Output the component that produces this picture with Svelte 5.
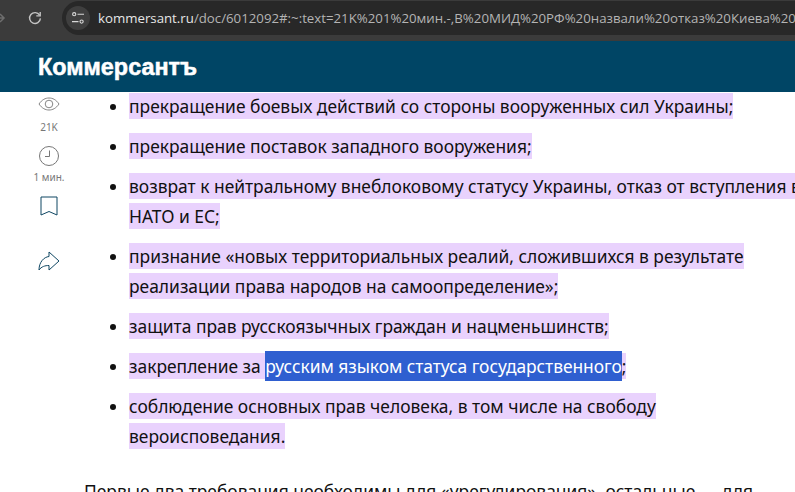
<script>
  const items = [
    [["прекращение боевых действий со стороны вооруженных сил Украины;"]],
    [["прекращение поставок западного вооружения;"]],
    [["возврат к нейтральному внеблоковому статусу Украины, отказ от вступления в"], ["НАТО и ЕС;"]],
    [["признание «новых территориальных реалий, сложившихся в результате"], ["реализации права народов на самоопределение»;"]],
    [["защита прав русскоязычных граждан и нацменьшинств;"]],
    [["закрепление за ", "русским языком статуса государственного", ";"]],
    [["соблюдение основных прав человека, в том числе на свободу"], ["вероисповедания."]],
  ];
</script>

<div class="page">
  <div class="toolbar">
    <svg class="fwd" width="14" height="14" viewBox="0 0 14 14"><path d="M-6 7H4M0 3l4 4-4 4" fill="none" stroke="#6e6e6e" stroke-width="1.5"/></svg>
    <svg class="reload" width="14" height="14" viewBox="0 0 14 14"><path d="M11.6 4.2A5.4 5.4 0 1 0 12.4 7.4" fill="none" stroke="#c4c4c4" stroke-width="1.4"/><path d="M12.2 1v3.9H8.3" fill="none" stroke="#c4c4c4" stroke-width="1.4"/></svg>
    <div class="omnibox">
      <div class="tune">
        <svg width="14" height="14" viewBox="0 0 14 14" fill="none" stroke="#d8d8d8" stroke-width="1.1"><circle cx="3.2" cy="3.2" r="1.6"/><path d="M6.5 3.2H13M1 10.6h6.5"/><circle cx="10.6" cy="10.6" r="1.6"/></svg>
      </div>
      <span class="url">kommersant.ru<span class="dim">/doc/6012092#:~:text=21K%201%20мин.-,В%20МИД%20РФ%20назвали%20отказ%20Киева%20</span></span>
    </div>
  </div>

  <header class="brand">
    <span class="logo">Коммерсантъ</span>
  </header>

  <div class="body">
    <aside class="side">
      <svg class="eye" width="22" height="14" viewBox="0 0 22 14" fill="none" stroke="#777" stroke-width="0.9"><path d="M1 7C4 2.600 7.400 1 11 1s7 1.600 10 6c-3 4.400-6.400 6-10 6S4 11.400 1 7z"/><circle cx="11" cy="7" r="3.800"/></svg>
      <span class="stat views">21K</span>
      <svg class="clock" width="20" height="20" viewBox="0 0 20 20" fill="none" stroke="#777" stroke-width="1"><circle cx="10" cy="10" r="9.500"/><path d="M10.500 4.500v6H6"/></svg>
      <span class="stat time">1 мин.</span>
      <svg class="mark" width="18" height="20" viewBox="0 0 18 20" fill="none" stroke="#0f4763" stroke-width="1"><path d="M1 1h16v18l-8-3.500-8 3.500z"/></svg>
      <svg class="share" width="22" height="20" viewBox="0 0 22 20" fill="none" stroke="#0f4763" stroke-width="1"><path d="M11 1l10 9-10 9v-4.500C7 14.500 3.500 15.500 1 19 1 11 6 6 11 5.500z"/></svg>
    </aside>

    <div class="article">
      <ul>
        {#each items as lines}
          <li>
            {#each lines as line}
              <div class="line">
                {#if line.length === 1}
                  <mark>{line[0]}</mark>
                {:else}
                  <mark>{line[0]}</mark><span class="sel">{line[1]}</span><mark>{line[2]}</mark>
                {/if}
              </div>
            {/each}
          </li>
        {/each}
      </ul>
      <p>Первые два требования необходимы для «урегулирования», остальные — для</p>
    </div>
  </div>
</div>

<style>
  :global(body) {
    margin: 0;
    background: #fff;
  }

  .page {
    width: 795px;
    height: 492px;
    overflow: hidden;
    font-family: "Noto Sans", sans-serif;
  }

  .toolbar {
    height: 41px;
    background: #3b3b3b;
    display: flex;
    align-items: center;
    position: relative;
    box-sizing: border-box;
    padding-left: 28px;
  }

  .fwd {
    position: absolute;
    left: 0;
    top: 11px;
  }

  .reload {
    flex-shrink: 0;
    margin-top: -6px;
  }

  .omnibox {
    margin-left: 20px;
    height: 34px;
    flex: 1;
    margin-top: -6px;
    margin-right: -40px;
    background: #282828;
    border-radius: 17px 0 0 17px;
    display: flex;
    align-items: center;
    padding-left: 4px;
    white-space: nowrap;
    overflow: hidden;
  }

  .tune {
    width: 24px;
    height: 24px;
    border-radius: 50%;
    background: #3f3f3f;
    display: flex;
    align-items: center;
    justify-content: center;
    flex-shrink: 0;
  }

  .url {
    margin-left: 8px;
    font-size: 13.25px;
    color: #e6e6e6;
    font-family: "Open Sans", "Noto Sans", sans-serif;
  }

  .dim {
    color: #b4b4b4;
  }

  .brand {
    height: 51px;
    box-sizing: border-box;
    padding-top: 2px;
    background: #004565;
    display: flex;
    align-items: center;
    padding-left: 38px;
  }

  .logo {
    font-family: "Liberation Sans", sans-serif;
    font-weight: 700;
    font-size: 23.4px;
    color: #fff;
    -webkit-text-stroke: 0.5px #fff;
  }

  .body {
    display: flex;
  }

  .side {
    width: 98px;
    flex-shrink: 0;
    display: flex;
    flex-direction: column;
    align-items: center;
  }

  .eye {
    margin-top: 5px;
  }

  .stat {
    font-size: 10px;
    line-height: 14px;
    color: #777;
  }

  .views {
    margin-top: 9px;
  }

  .clock {
    margin-top: 12px;
  }

  .time {
    margin-top: 4px;
  }

  .mark {
    margin-top: 12px;
  }

  .share {
    margin-top: 35px;
  }

  .article {
    flex: 1;
    min-width: 0;
    font-size: 17.42px;
    color: #111;
    white-space: nowrap;
  }

  ul {
    margin: -1px 0 0;
    padding: 0 0 0 31px;
    list-style: disc;
  }

  li {
    margin-bottom: 10px;
  }

  .line {
    height: 30px;
    display: flex;
    align-items: center;
    white-space: pre;
  }

  mark {
    background: #e9d2fd;
    color: inherit;
    line-height: 26px;
  }

  .sel {
    background: #2f5fd0;
    color: #fff;
    line-height: 30px;
    letter-spacing: -0.05px;
  }

  p {
    margin: 25px 0 0 -14px;
    line-height: 30px;
  }
</style>
